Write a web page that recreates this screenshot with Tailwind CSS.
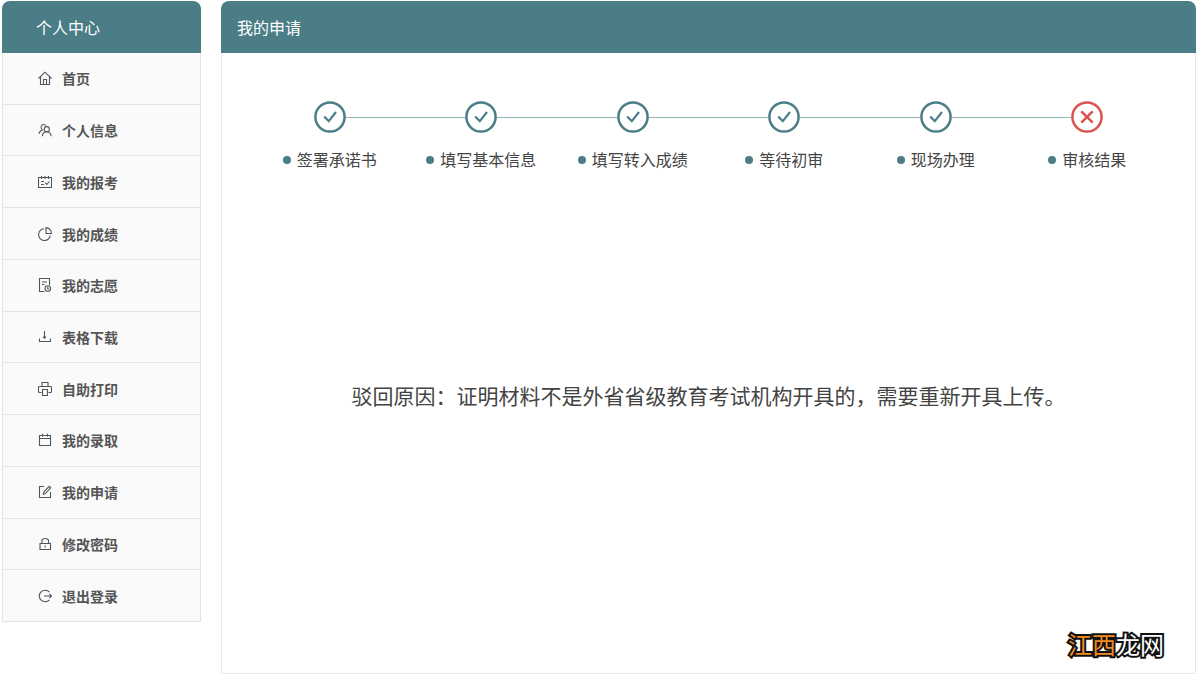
<!DOCTYPE html>
<html lang="zh-CN">
<head>
<meta charset="utf-8">
<meta name="viewport" content="width=device-width, initial-scale=1">
<title>我的申请</title>
<script src="https://cdn.jsdelivr.net/npm/@tailwindcss/browser@4"></script>
</head>
<body class="bg-white font-['Noto_Sans_CJK_SC',sans-serif] text-[#444]">
<svg class="hidden" aria-hidden="true">
  <symbol id="check" viewBox="0 0 32 32"><circle cx="16" cy="16" r="14.6" fill="none" stroke="currentColor" stroke-width="2.5"/><path d="M10.200 15.500l4.600 4.700 7.200-9.200" fill="none" stroke="currentColor" stroke-width="2.200"/></symbol>
  <symbol id="cross" viewBox="0 0 32 32"><circle cx="16" cy="16" r="14.6" fill="none" stroke="currentColor" stroke-width="2.5"/><path d="M10.300 10.300l11.400 11.400M21.700 10.300L10.300 21.700" fill="none" stroke="currentColor" stroke-width="2.500"/></symbol>
</svg>
<div class="flex min-h-screen items-start gap-5 pt-px pr-1 pb-0.5 pl-0.5">
  <aside class="w-[199px] shrink-0">
    <h2 class="flex h-[52px] items-center rounded-t-lg bg-[#4a7d86] px-[34px] text-base text-white">个人中心</h2>
    <nav class="grid min-h-[569px] auto-rows-fr border-x border-[#e4e4e4] bg-[#fafafa] text-sm font-bold text-[#555]" aria-label="个人中心">
      <a href="#" class="flex items-center gap-2.5 border-b border-[#e4e4e4] px-[35px]"><svg class="size-3.5" viewBox="0 0 14 14" fill="none" stroke="currentColor" stroke-width="1.1"><path d="M.5 7.500L7 1.200l6.500 6.300M2.500 6v7.500h9V6M5.500 13.500v-5h3v5"/></svg>首页</a>
      <a href="#" class="flex items-center gap-2.5 border-b border-[#e4e4e4] px-[35px]"><svg class="size-3.5" viewBox="0 0 14 14" fill="none" stroke="currentColor" stroke-width="1.1"><path d="M4.800 6.700A2.700 2.700 0 1 1 8 2.700M1 10.800c.2-2 1.300-3.300 3.800-4.100"/><circle cx="8.800" cy="6.200" r="2.600"/><path d="M4.300 13.200c.2-2.500 2-4.400 4.500-4.400s4.100 1.900 4.400 4.400"/></svg>个人信息</a>
      <a href="#" class="flex items-center gap-2.5 border-b border-[#e4e4e4] px-[35px]"><svg class="size-3.5" viewBox="0 0 14 14" fill="none" stroke="currentColor" stroke-width="1.1"><path d="M.5 2.500h13v10H.5zM3.500 1v3M7 1v3M10.500 1v3M3 6.500h3M3 9.500h3M7.300 7.700l1.500 1.800L11.300 6.500"/></svg>我的报考</a>
      <a href="#" class="flex items-center gap-2.5 border-b border-[#e4e4e4] px-[35px]"><svg class="size-3.5" viewBox="0 0 14 14" fill="none" stroke="currentColor" stroke-width="1.1"><path d="M6 1.700A5.900 5.900 0 1 0 12.300 8.500"/><path d="M8 .6v5.900h5.400A5.800 5.800 0 0 0 8 .6z"/></svg>我的成绩</a>
      <a href="#" class="flex items-center gap-2.5 border-b border-[#e4e4e4] px-[35px]"><svg class="size-3.5" viewBox="0 0 14 14" fill="none" stroke="currentColor" stroke-width="1.1"><path d="M6.500 13.500h-5V.5h10v6.500M4 4h5M4 6.500h2.500"/><circle cx="9.800" cy="10.500" r="2.800"/><path d="M9.800 8.800v2.200h1.200"/></svg>我的志愿</a>
      <a href="#" class="flex items-center gap-2.5 border-b border-[#e4e4e4] px-[35px]"><svg class="size-3.5" viewBox="0 0 14 14" fill="none" stroke="currentColor" stroke-width="1.1"><path d="M6.500 1v7M5 6.700l1.500 1.500L8 6.700M1.500 8.500v3h11v-3"/></svg>表格下载</a>
      <a href="#" class="flex items-center gap-2.5 border-b border-[#e4e4e4] px-[35px]"><svg class="size-3.5" viewBox="0 0 14 14" fill="none" stroke="currentColor" stroke-width="1.1"><path d="M4 4.500v-4h6v4M3.500 10.500h-2q-1 0-1-1v-4q0-1 1-1h11q1 0 1 1v4q0 1-1 1h-2M4.500 7.500h5v6h-5z"/></svg>自助打印</a>
      <a href="#" class="flex items-center gap-2.5 border-b border-[#e4e4e4] px-[35px]"><svg class="size-3.5" viewBox="0 0 14 14" fill="none" stroke="currentColor" stroke-width="1.1"><path d="M1.500 2.500h11v10h-11zM1.500 5.500h11M4.500.8v3M9.500.8v3"/></svg>我的录取</a>
      <a href="#" class="flex items-center gap-2.5 border-b border-[#e4e4e4] px-[35px]"><svg class="size-3.5" viewBox="0 0 14 14" fill="none" stroke="currentColor" stroke-width="1.1"><path d="M6 1.500H1.500v11h11V7M5.300 9.200l.5-2.200 5.400-5.700 1.500 1.500-5.300 5.700z"/></svg>我的申请</a>
      <a href="#" class="flex items-center gap-2.5 border-b border-[#e4e4e4] px-[35px]"><svg class="size-3.5" viewBox="0 0 14 14" fill="none" stroke="currentColor" stroke-width="1.1"><path d="M2 6.500h10.500v6H2zM4 6.500V3.800Q4 1.500 7.200 1.500t3.300 2.300v2.700M7.200 8.500v2"/></svg>修改密码</a>
      <a href="#" class="flex items-center gap-2.5 border-b border-[#e4e4e4] px-[35px]"><svg class="size-3.5" viewBox="0 0 14 14" fill="none" stroke="currentColor" stroke-width="1.1"><path d="M11.500 3.200A5.800 5.800 0 1 0 11.500 10.800M6 7h7.500M11.500 5L13.500 7l-2 2"/></svg>退出登录</a>
    </nav>
  </aside>

  <main class="relative flex min-w-0 flex-1 flex-col self-stretch">
    <h1 class="flex h-[52px] items-center rounded-t-lg bg-[#4a7d86] px-4 text-base text-white">我的申请</h1>
    <section class="flex flex-1 flex-col border border-t-0 border-[#e8e8e8] px-8 pt-12">
      <ol class="grid grid-cols-6 text-base">
        <li class="flex flex-col items-center gap-3.5">
          <div class="flex w-full items-center text-[#4a7d86]"><span class="flex-1"></span><svg class="size-8" role="img" aria-label="已完成"><use href="#check"/></svg><span class="h-px flex-1 bg-[#8fb3b6]"></span></div>
          <div class="flex items-center gap-1.5 leading-6 whitespace-nowrap"><span class="mt-0.5 size-2 rounded-full bg-[#4a7d86]"></span>签署承诺书</div>
        </li>
        <li class="flex flex-col items-center gap-3.5">
          <div class="flex w-full items-center text-[#4a7d86]"><span class="h-px flex-1 bg-[#8fb3b6]"></span><svg class="size-8" role="img" aria-label="已完成"><use href="#check"/></svg><span class="h-px flex-1 bg-[#8fb3b6]"></span></div>
          <div class="flex items-center gap-1.5 leading-6 whitespace-nowrap"><span class="mt-0.5 size-2 rounded-full bg-[#4a7d86]"></span>填写基本信息</div>
        </li>
        <li class="flex flex-col items-center gap-3.5">
          <div class="flex w-full items-center text-[#4a7d86]"><span class="h-px flex-1 bg-[#8fb3b6]"></span><svg class="size-8" role="img" aria-label="已完成"><use href="#check"/></svg><span class="h-px flex-1 bg-[#8fb3b6]"></span></div>
          <div class="flex items-center gap-1.5 leading-6 whitespace-nowrap"><span class="mt-0.5 size-2 rounded-full bg-[#4a7d86]"></span>填写转入成绩</div>
        </li>
        <li class="flex flex-col items-center gap-3.5">
          <div class="flex w-full items-center text-[#4a7d86]"><span class="h-px flex-1 bg-[#8fb3b6]"></span><svg class="size-8" role="img" aria-label="已完成"><use href="#check"/></svg><span class="h-px flex-1 bg-[#8fb3b6]"></span></div>
          <div class="flex items-center gap-1.5 leading-6 whitespace-nowrap"><span class="mt-0.5 size-2 rounded-full bg-[#4a7d86]"></span>等待初审</div>
        </li>
        <li class="flex flex-col items-center gap-3.5">
          <div class="flex w-full items-center text-[#4a7d86]"><span class="h-px flex-1 bg-[#8fb3b6]"></span><svg class="size-8" role="img" aria-label="已完成"><use href="#check"/></svg><span class="h-px flex-1 bg-[#8fb3b6]"></span></div>
          <div class="flex items-center gap-1.5 leading-6 whitespace-nowrap"><span class="mt-0.5 size-2 rounded-full bg-[#4a7d86]"></span>现场办理</div>
        </li>
        <li class="flex flex-col items-center gap-3.5">
          <div class="flex w-full items-center text-[#d9534f]"><span class="h-px flex-1 bg-[#8fb3b6]"></span><svg class="size-8" role="img" aria-label="未通过"><use href="#cross"/></svg><span class="flex-1"></span></div>
          <div class="flex items-center gap-1.5 leading-6 whitespace-nowrap"><span class="mt-0.5 size-2 rounded-full bg-[#4a7d86]"></span>审核结果</div>
        </li>
      </ol>
      <p class="pt-52 pb-24 text-center text-[21px] leading-8">驳回原因：证明材料不是外省省级教育考试机构开具的，需要重新开具上传。</p>
    </section>
    <div class="absolute right-8 bottom-3.5 text-2xl leading-8 text-white [-webkit-text-stroke:4px_#111] [paint-order:stroke_fill]"><span class="text-[#f08a1c]">江西</span>龙网</div>
  </main>
</div>
</body>
</html>
